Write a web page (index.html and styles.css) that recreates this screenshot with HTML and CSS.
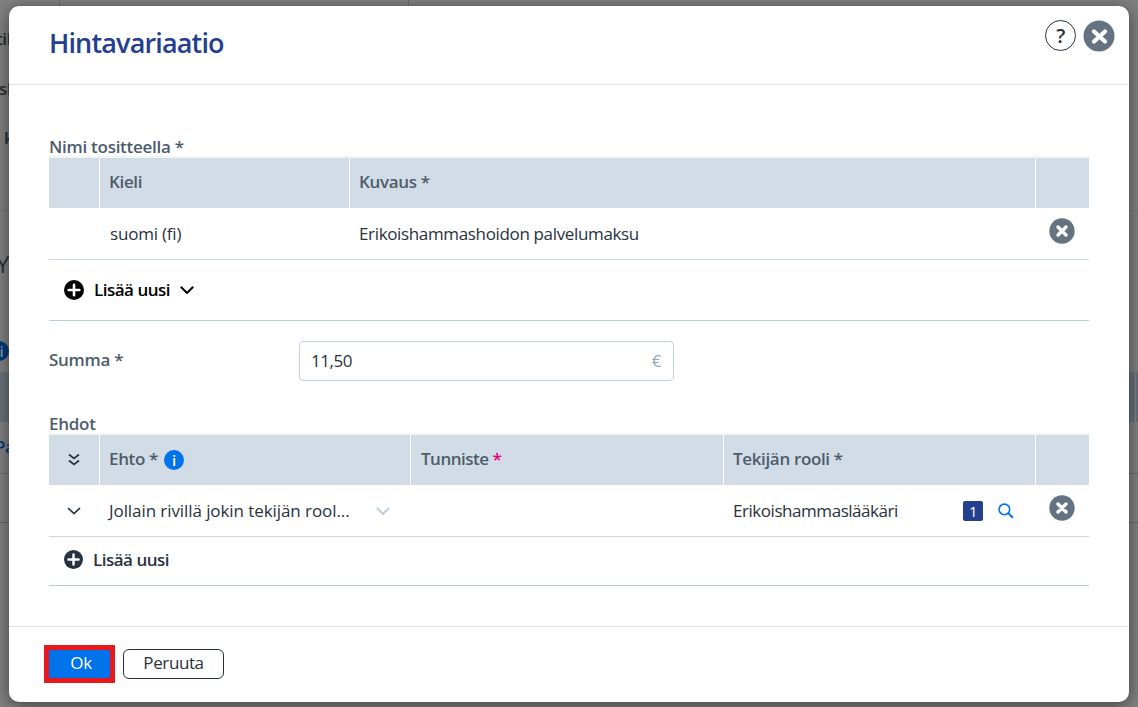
FILE: index.html
```html
<!DOCTYPE html>
<html lang="fi">
<head>
  <meta charset="UTF-8">
  <meta name="viewport" content="width=device-width, initial-scale=1.0">
  <title>Hintavariaatio</title>
  <link rel="stylesheet" href="styles.css">
</head>
<body>
  <!-- page behind the dialog -->
  <div class="page" aria-hidden="true">
    <div class="page-tabs"><span></span><span></span></div>
    <div class="page-row page-label">til</div>
    <div class="page-row page-label page-label-sl">sl</div>
    <div class="page-row page-label page-label-k">k</div>
    <div class="page-row page-title">Y</div>
    <div class="page-row page-info"><span class="info">i</span></div>
    <div class="page-band"><span></span></div>
    <div class="page-row page-link">Pa</div>
    <div class="page-row page-empty"></div>
  </div>

  <div class="modal" role="dialog">
    <header class="modal-header">
      <h1>Hintavariaatio</h1>
      <div class="modal-tools">
        <button class="help">?</button>
        <button class="icon-button">
          <svg width="32" height="32" viewBox="0 0 32 32"><circle cx="16" cy="16" r="15.5" fill="#647381"/><path d="M11 11.5l11 10M22 11.5l-11 10" stroke="#fff" stroke-width="4.2" stroke-linecap="round"/></svg>
        </button>
      </div>
    </header>

    <main class="modal-body">
      <h2>Nimi tositteella *</h2>
      <div class="table names">
        <div class="table-head">
          <div></div>
          <div>Kieli</div>
          <div>Kuvaus *</div>
          <div></div>
        </div>
        <div class="table-row">
          <div></div>
          <div class="lang">suomi (fi)</div>
          <div>Erikoishammashoidon palvelumaksu</div>
          <div class="remove">
            <svg width="26" height="26" viewBox="0 0 26 26"><circle cx="13" cy="13" r="12.7" fill="#647381"/><path d="M9 9l8 8M17 9l-8 8" stroke="#fff" stroke-width="3.4" stroke-linecap="round"/></svg>
          </div>
        </div>
        <div class="add-row">
          <svg width="20" height="20" viewBox="0 0 20 20"><circle cx="10" cy="10" r="10" fill="#000"/><path d="M10 4.7v10.6M4.7 10h10.6" stroke="#fff" stroke-width="2.6" stroke-linecap="round"/></svg>
          <span>Lisää uusi</span>
          <svg class="chevron" width="14" height="8" viewBox="0 0 14 8"><path d="M.8 .8L7 7 13.2 .8" fill="none" stroke="#000" stroke-width="2"/></svg>
        </div>
      </div>

      <div class="field">
        <label>Summa *</label>
        <div class="input"><span>11,50</span><span class="unit">€</span></div>
      </div>

      <h2>Ehdot</h2>
      <div class="table conditions">
        <div class="table-head">
          <div class="toggle">
            <svg width="12" height="14" viewBox="0 0 12 14"><path d="M1 1.5l5 4 5-4M1 7.5l5 4 5-4" fill="none" stroke="#28323e" stroke-width="1.7"/></svg>
          </div>
          <div><span>Ehto *</span><span class="info">i</span></div>
          <div class="code">Tunniste <span class="required">*</span></div>
          <div>Tekijän rooli *</div>
          <div></div>
        </div>
        <div class="table-row">
          <div class="toggle">
            <svg width="14" height="8" viewBox="0 0 14 8"><path d="M1 1l6 5.7L13 1" fill="none" stroke="#28323e" stroke-width="1.7"/></svg>
          </div>
          <div class="select">
            <span>Jollain rivillä jokin tekijän rool...</span>
            <svg width="14" height="8" viewBox="0 0 14 8"><path d="M.8 .8L7 7 13.2 .8" fill="none" stroke="#bccadb" stroke-width="1.8"/></svg>
          </div>
          <div></div>
          <div class="role">
            <span class="role-name">Erikoishammaslääkäri</span>
            <span class="count">1</span>
            <svg width="16" height="16" viewBox="0 0 16 16"><circle cx="6.4" cy="6.4" r="5.3" fill="none" stroke="#0073eb" stroke-width="1.6"/><path d="M10.3 10.3l4.7 4.5" stroke="#0073eb" stroke-width="1.9"/></svg>
          </div>
          <div class="remove">
            <svg width="26" height="26" viewBox="0 0 26 26"><circle cx="13" cy="13" r="12.7" fill="#647381"/><path d="M9 9l8 8M17 9l-8 8" stroke="#fff" stroke-width="3.4" stroke-linecap="round"/></svg>
          </div>
        </div>
        <div class="add-row add-condition">
          <svg width="19" height="19" viewBox="0 0 20 20"><circle cx="10" cy="10" r="10" fill="#28323e"/><path d="M10 4.7v10.6M4.7 10h10.6" stroke="#fff" stroke-width="2.6" stroke-linecap="round"/></svg>
          <span>Lisää uusi</span>
        </div>
      </div>
    </main>

    <footer class="modal-footer">
      <div class="highlight"><button class="ok">Ok</button></div>
      <button class="cancel">Peruuta</button>
    </footer>
  </div>
</body>
</html>
```

FILE: styles.css
```css
* {
  box-sizing: border-box;
}
body {
  margin: 0;
  height: 707px;
  overflow: hidden;
  background: #808080;
  font-family: "Open Sans", "Noto Sans", sans-serif;
  font-size: 17px;
  line-height: 24px;
  color: #28323e;
  letter-spacing: -0.35px;
}
h1, h2 {
  margin: 0;
}
svg {
  display: block;
  flex: none;
}
button {
  font: inherit;
  letter-spacing: inherit;
  color: inherit;
  padding: 0;
  border: 0;
  background: none;
}

/* page behind */
.page {
  height: 707px;
  overflow: hidden;
  background: #808080;
}
.page-tabs {
  display: flex;
  height: 14px;
}
.page-tabs span {
  border-right: 1px solid #626b75;
  width: 60px;
}
.page-tabs span + span {
  width: 349px;
}
.page-row {
  display: flex;
  align-items: center;
  height: 50px;
  white-space: nowrap;
}
.page-label {
  color: #242c35;
  font-weight: 600;
  text-indent: -4px;
}
.page-label-sl {
  text-indent: -1px;
}
.page-label-k {
  height: 47px;
  text-indent: 4px;
}
.page-title {
  height: 161px;
  margin-top: 49px;
  padding-bottom: 54px;
  border-top: 1px solid #737678;
  font-size: 24px;
  text-indent: -4px;
}
.page-info {
  height: 1px;
  margin-top: -21px;
  margin-left: -11px;
}
.page .info {
  flex: none;
  margin: 0;
  background: #003b79;
  color: #8b949c;
  text-indent: 5px;
}
.page-band {
  display: flex;
  justify-content: flex-end;
  height: 50px;
  margin-top: 21px;
  background: #697077;
}
.page-band span {
  width: 3px;
  border-left: 1px solid #80868c;
}
.page-link {
  height: 52px;
  padding-bottom: 1px;
  border-bottom: 1px solid #666a70;
  color: #003b79;
  font-weight: 600;
  text-indent: -5px;
}
.page-empty {
  height: 49px;
  border-bottom: 1px solid #5e676f;
}

.modal {
  position: absolute;
  top: 6px;
  left: 9px;
  width: 1120px;
  height: 696px;
  display: flex;
  flex-direction: column;
  background: #fff;
  border-radius: 10px;
  box-shadow: 0 3px 16px rgba(0, 0, 0, 0.5);
}
.modal-header {
  display: flex;
  justify-content: space-between;
  height: 79px;
  padding: 14px 14px 0 40px;
  border-bottom: 1px solid #dde5ec;
}
.modal-header h1 {
  padding-top: 5px;
  font-size: 27px;
  line-height: 36px;
  font-weight: 600;
  letter-spacing: -0.85px;
  color: #233f8e;
}
.modal-tools {
  display: flex;
  gap: 7px;
}
.help {
  width: 31px;
  height: 31px;
  border: 1.5px solid #28323e;
  border-radius: 50%;
  font-size: 20px;
  font-weight: 600;
  line-height: 27px;
}
.icon-button {
  width: 32px;
  height: 32px;
}

.modal-body {
  flex: 1;
  padding: 53px 40px 0;
}
.modal-body h2,
.field label {
  font-size: 17px;
  line-height: 18px;
  font-weight: 600;
  letter-spacing: -0.27px;
  color: #4d5c6b;
}
.table-head,
.table-row {
  display: grid;
}
.names .table-head,
.names .table-row {
  grid-template-columns: 51px 250px 686px 53px;
}
.conditions .table-head,
.conditions .table-row {
  grid-template-columns: 51px 311px 313px 312px 53px;
}
.table-head {
  height: 52px;
  border-top: 2px solid #f2f5f8;
  background: #d2dce6;
  color: #4d5c6b;
  font-weight: 600;
}
.table-head > div {
  display: flex;
  padding: 12px 0 0 9px;
  border-right: 1px solid #fff;
  white-space: pre;
}
.table-head > div:last-child {
  border-right: 0;
}
.table-head .code {
  padding-left: 10px;
  letter-spacing: -0.5px;
}
.table-row {
  height: 52px;
  border-bottom: 1px solid #ced8e2;
}
.table-row > div {
  padding: 14px 0 0 9px;
  white-space: nowrap;
}
.table-row .lang {
  padding-left: 10px;
  letter-spacing: -0.2px;
}
.table-row .remove {
  padding: 10px 0 0 13px;
}
.add-row {
  display: flex;
  align-items: center;
  height: 61px;
  padding-left: 15px;
  border-bottom: 1px solid #bccadb;
  color: #000;
  font-weight: 600;
  letter-spacing: -0.5px;
}
.add-row span {
  margin-left: 10px;
}
.chevron {
  margin-left: 10px;
}

.field {
  display: flex;
  height: 40px;
  margin: 20px 0 34px;
}
.field label {
  width: 250px;
  padding-top: 10px;
}
.input {
  display: flex;
  justify-content: space-between;
  align-items: center;
  width: 375px;
  padding: 0 12px 0 11px;
  border: 1.5px solid #c4d0de;
  border-radius: 4px;
  letter-spacing: -0.45px;
}
.unit {
  color: #94a5b8;
}

.conditions .toggle {
  display: flex;
  justify-content: center;
  padding: 18px 0 0;
}
.conditions .table-row .toggle {
  padding: 22px 1px 0 0;
}
.info {
  width: 20px;
  height: 20px;
  margin: 3px 0 0 6px;
  border-radius: 50%;
  background: #0073eb;
  color: #fff;
  font-size: 15px;
  font-weight: 600;
  line-height: 20px;
  text-align: center;
}
.required {
  color: #e5007d;
}
.select {
  display: flex;
}
.select span {
  width: 267px;
  letter-spacing: -0.08px;
}
.select svg {
  margin-top: 8px;
}
.role {
  display: flex;
  letter-spacing: -0.45px;
}
.role-name {
  width: 230px;
}
.count {
  width: 20px;
  height: 20px;
  margin: 2px 15px 0 0;
  border-radius: 2px;
  background: #233f8e;
  color: #fff;
  font-size: 15px;
  line-height: 20px;
  text-align: center;
}
.role svg {
  margin-top: 4px;
}
.add-condition {
  height: 49px;
  padding-bottom: 3px;
  color: #28323e;
}

.modal-footer {
  display: flex;
  gap: 8px;
  height: 76px;
  padding: 18px 35px 0;
  border-top: 1px solid #dde5ec;
}
.highlight {
  display: flex;
  width: 71px;
  height: 38px;
  padding: 5px;
  background: #e8191c;
}
.ok {
  flex: 1;
  padding: 0 0 2px 3px;
  border-radius: 2px;
  background: #0073eb;
  color: #fff;
}
.cancel {
  width: 101px;
  height: 30px;
  margin-top: 4px;
  padding-bottom: 3px;
  border: 1.5px solid #28323e;
  border-radius: 6px;
  line-height: 24px;
  letter-spacing: -0.4px;
}
```
